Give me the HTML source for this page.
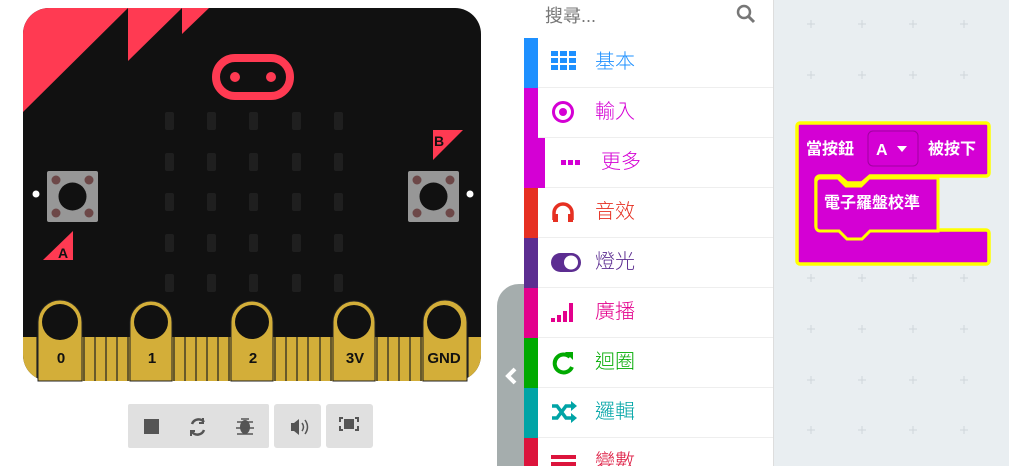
<!DOCTYPE html>
<html style="height:466px;overflow:hidden"><head><meta charset="utf-8"><style>
body{margin:0;width:1009px;height:466px;overflow:hidden;background:#fff;position:relative;font-family:"Liberation Sans","Noto Sans CJK TC",sans-serif}
.cat{position:absolute;left:524px;width:249px;height:49px;border-bottom:1px solid #eee;}
.cat .bar{position:absolute;left:0;top:0;width:14px;height:50px}
.cat .t{position:absolute;left:71px;top:12px;font-size:20px;line-height:24px;font-weight:300}
.cat svg{position:absolute;left:27px;top:13px}
</style></head><body>
<svg width="500" height="466" style="position:absolute;left:0;top:0">
<defs><clipPath id="b"><rect x="23" y="8" width="458" height="373" rx="26"/></clipPath></defs>
<g clip-path="url(#b)">
<rect x="23" y="8" width="458" height="373" fill="#111"/>
<polygon points="23,8 128,8 23,112" fill="#ff3a52"/>
<polygon points="128,8 182,8 128,61" fill="#ff3a52"/>
<polygon points="182,8 209,8 182,34" fill="#ff3a52"/>
<rect x="23" y="337" width="458" height="44" fill="#d3ae39"/>
<g stroke="#222" stroke-width="1.2">
<line x1="84" y1="337" x2="84" y2="381"/><line x1="95" y1="337" x2="95" y2="381"/><line x1="106" y1="337" x2="106" y2="381"/><line x1="117" y1="337" x2="117" y2="381"/><line x1="128" y1="337" x2="128" y2="381"/>
<line x1="174" y1="337" x2="174" y2="381"/><line x1="185" y1="337" x2="185" y2="381"/><line x1="196" y1="337" x2="196" y2="381"/><line x1="207" y1="337" x2="207" y2="381"/><line x1="218" y1="337" x2="218" y2="381"/><line x1="229" y1="337" x2="229" y2="381"/>
<line x1="275" y1="337" x2="275" y2="381"/><line x1="286" y1="337" x2="286" y2="381"/><line x1="297" y1="337" x2="297" y2="381"/><line x1="308" y1="337" x2="308" y2="381"/><line x1="320" y1="337" x2="320" y2="381"/><line x1="331" y1="337" x2="331" y2="381"/>
<line x1="377" y1="337" x2="377" y2="381"/><line x1="388" y1="337" x2="388" y2="381"/><line x1="399" y1="337" x2="399" y2="381"/><line x1="410" y1="337" x2="410" y2="381"/><line x1="421" y1="337" x2="421" y2="381"/>
<line x1="37" y1="337" x2="37" y2="381"/><line x1="468" y1="337" x2="468" y2="381"/>
</g>
</g>
<g fill="#d3ae39" stroke="#222" stroke-width="1">
<path d="M38,381 V322 a22,22 0 0 1 44,0 V381Z"/>
<path d="M130,381 V322 a21,21 0 0 1 42,0 V381Z"/>
<path d="M231,381 V322 a21,21 0 0 1 42,0 V381Z"/>
<path d="M333,381 V322 a21,21 0 0 1 42,0 V381Z"/>
<path d="M423,381 V322 a22,22 0 0 1 44,0 V381Z"/>
</g>
<g fill="#111"><circle cx="60" cy="322" r="18"/><circle cx="151" cy="322" r="17"/><circle cx="252" cy="322" r="17"/><circle cx="354" cy="322" r="17"/><circle cx="444" cy="322" r="17"/></g>
<g font-family="Liberation Sans" font-weight="bold" font-size="15" text-anchor="middle" fill="#111">
<text x="61" y="363">0</text><text x="152" y="363">1</text><text x="253" y="363">2</text><text x="355" y="363">3V</text><text x="444" y="363">GND</text></g>
<rect x="216" y="58" width="74" height="38" rx="19" fill="none" stroke="#ff3a52" stroke-width="8"/>
<circle cx="235" cy="77" r="5" fill="#ff3a52"/><circle cx="271" cy="77" r="5" fill="#ff3a52"/>
<g fill="#1f1f1f">
<rect x="165" y="112" width="9" height="18" rx="2"/><rect x="207" y="112" width="9" height="18" rx="2"/><rect x="249" y="112" width="9" height="18" rx="2"/><rect x="292" y="112" width="9" height="18" rx="2"/><rect x="334" y="112" width="9" height="18" rx="2"/>
<rect x="165" y="153" width="9" height="18" rx="2"/><rect x="207" y="153" width="9" height="18" rx="2"/><rect x="249" y="153" width="9" height="18" rx="2"/><rect x="292" y="153" width="9" height="18" rx="2"/><rect x="334" y="153" width="9" height="18" rx="2"/>
<rect x="165" y="193" width="9" height="18" rx="2"/><rect x="207" y="193" width="9" height="18" rx="2"/><rect x="249" y="193" width="9" height="18" rx="2"/><rect x="292" y="193" width="9" height="18" rx="2"/><rect x="334" y="193" width="9" height="18" rx="2"/>
<rect x="165" y="234" width="9" height="18" rx="2"/><rect x="207" y="234" width="9" height="18" rx="2"/><rect x="249" y="234" width="9" height="18" rx="2"/><rect x="292" y="234" width="9" height="18" rx="2"/><rect x="334" y="234" width="9" height="18" rx="2"/>
<rect x="165" y="274" width="9" height="18" rx="2"/><rect x="207" y="274" width="9" height="18" rx="2"/><rect x="249" y="274" width="9" height="18" rx="2"/><rect x="292" y="274" width="9" height="18" rx="2"/><rect x="334" y="274" width="9" height="18" rx="2"/>
</g>
<rect x="47" y="171" width="51" height="51" rx="2" fill="#979797"/><circle cx="72.5" cy="196.5" r="14" fill="#111"/>
<g fill="#6d4848"><circle cx="56" cy="180" r="4.5"/><circle cx="89" cy="180" r="4.5"/><circle cx="56" cy="213" r="4.5"/><circle cx="89" cy="213" r="4.5"/></g>
<rect x="408" y="171" width="51" height="51" rx="2" fill="#979797"/><circle cx="433.5" cy="196.5" r="14" fill="#111"/>
<g fill="#6d4848"><circle cx="417" cy="180" r="4.5"/><circle cx="450" cy="180" r="4.5"/><circle cx="417" cy="213" r="4.5"/><circle cx="450" cy="213" r="4.5"/></g>
<circle cx="36" cy="194" r="3.5" fill="#fff"/><circle cx="470" cy="194" r="3.5" fill="#fff"/>
<polygon points="43,260 73,260 73,231" fill="#ff3a52"/><text x="58" y="258" font-family="Liberation Sans" font-weight="bold" font-size="14" fill="#111">A</text>
<polygon points="433,130 463,130 433,160" fill="#ff3a52"/><text x="434" y="146" font-family="Liberation Sans" font-weight="bold" font-size="14" fill="#111">B</text>
<rect x="128" y="404" width="141" height="44" fill="#e0e0e0" rx="2"/>
<rect x="274" y="404" width="47" height="44" fill="#e0e0e0" rx="3"/>
<rect x="326" y="404" width="47" height="44" fill="#e0e0e0" rx="3"/>
<rect x="144" y="419" width="15" height="15" fill="#555"/>
<path d="M192,424 a7,7 0 0 1 12,-2 M204,430 a7,7 0 0 1 -12,2" stroke="#555" stroke-width="2.5" fill="none"/>
<path d="M203,418 v5 h-4 M191,436 v-5 h4" stroke="#555" stroke-width="2" fill="none"/>
<ellipse cx="245" cy="427" rx="5" ry="7" fill="#555"/><path d="M237,422 l16,0 M236,428 h18 M237,434 l16,0 M241,419 l8,0" stroke="#555" stroke-width="1.5"/>
<path d="M291,423 h3 l5,-4 v16 l-5,-4 h-3z" fill="#555"/><path d="M302,423 q3,4 0,8 M305,420 q5,7 0,14" stroke="#555" stroke-width="1.5" fill="none"/>
<path d="M343,418 h-3 v4 M355,418 h3 v4 M343,430 h-3 v-4 M355,430 h3 v-4" stroke="#555" stroke-width="2" fill="none"/><rect x="344" y="419" width="10" height="10" fill="#555"/>
</svg>
<div style="position:absolute;left:497px;top:284px;width:40px;height:182px;background:#a5adad;border-radius:22px 0 0 0"></div>
<svg style="position:absolute;left:503px;top:366px" width="16" height="20"><path d="M12,3 L5,10 L12,17" stroke="#fff" stroke-width="4" fill="none"/></svg>
<div style="position:absolute;left:524px;top:0;width:249px;height:466px;background:#fff;border-right:1px solid #ddd"></div>
<div style="position:absolute;left:545px;top:2px;font-size:18px;color:#777">搜尋...</div>
<svg style="position:absolute;left:736px;top:4px" width="20" height="20"><circle cx="8" cy="8" r="6" stroke="#777" stroke-width="2.5" fill="none"/><path d="M12.5,12.5 L18,18" stroke="#777" stroke-width="3"/></svg>
<div style="position:absolute;left:774px;top:0;width:235px;height:466px;background:#e9eef1"></div>
<svg style="position:absolute;left:774px;top:0" width="235" height="466"><g stroke="#d0d6da" stroke-width="1">
<path d="M33,24h8M37,20v8M84,24h8M88,20v8M135,24h8M139,20v8M186,24h8M190,20v8
M33,75h8M37,71v8M84,75h8M88,71v8M135,75h8M139,71v8M186,75h8M190,71v8
M33,278h8M37,274v8M84,278h8M88,274v8M135,278h8M139,274v8M186,278h8M190,274v8
M33,329h8M37,325v8M84,329h8M88,325v8M135,329h8M139,325v8M186,329h8M190,325v8
M33,380h8M37,376v8M84,380h8M88,376v8M135,380h8M139,376v8M186,380h8M190,376v8
M33,430h8M37,426v8M84,430h8M88,426v8M135,430h8M139,426v8M186,430h8M190,426v8"/></g></svg>

<div class="cat" style="top:38px"><div class="bar" style="background:#1e90ff"></div>
<svg width="28" height="22"><g fill="#1e90ff"><rect x="0" y="0" width="7" height="5"/><rect x="9" y="0" width="7" height="5"/><rect x="18" y="0" width="7" height="5"/><rect x="0" y="7" width="7" height="5"/><rect x="9" y="7" width="7" height="5"/><rect x="18" y="7" width="7" height="5"/><rect x="0" y="14" width="7" height="5"/><rect x="9" y="14" width="7" height="5"/><rect x="18" y="14" width="7" height="5"/></g></svg>
<div class="t" style="color:#1e90ff">基本</div></div>
<div class="cat" style="top:88px"><div class="bar" style="background:#d400d4"></div>
<svg width="28" height="24"><circle cx="12" cy="11" r="9.5" stroke="#d400d4" stroke-width="3" fill="none"/><circle cx="12" cy="11" r="4" fill="#d400d4"/></svg>
<div class="t" style="color:#d400d4">輸入</div></div>
<div class="cat" style="top:138px"><div class="bar" style="background:#d400d4;width:21px"></div>
<svg width="28" height="24" style="left:37px"><g fill="#d400d4"><rect x="0" y="9" width="5" height="5"/><rect x="7" y="9" width="5" height="5"/><rect x="14" y="9" width="5" height="5"/></g></svg>
<div class="t" style="color:#d400d4;left:77px">更多</div></div>
<div class="cat" style="top:188px"><div class="bar" style="background:#e63022"></div>
<svg width="28" height="24"><path d="M3,19 V12 a9,9 0 0 1 18,0 V19" stroke="#e63022" stroke-width="3.5" fill="none"/><rect x="2" y="13" width="5" height="8" fill="#e63022"/><rect x="17" y="13" width="5" height="8" fill="#e63022"/></svg>
<div class="t" style="color:#e63022">音效</div></div>
<div class="cat" style="top:238px"><div class="bar" style="background:#5c2d91"></div>
<svg width="32" height="24"><rect x="0" y="2" width="30" height="19" rx="9.5" fill="#5c2d91"/><circle cx="20" cy="11.5" r="7" fill="#fff"/></svg>
<div class="t" style="color:#5c2d91">燈光</div></div>
<div class="cat" style="top:288px"><div class="bar" style="background:#e3008c"></div>
<svg width="28" height="24"><g fill="#e3008c"><rect x="0" y="17" width="4" height="4"/><rect x="6" y="14" width="4" height="7"/><rect x="12" y="10" width="4" height="11"/><rect x="18" y="2" width="4" height="19"/></g></svg>
<div class="t" style="color:#e3008c">廣播</div></div>
<div class="cat" style="top:338px"><div class="bar" style="background:#00aa00"></div>
<svg width="28" height="24"><path d="M19,6 a9,9 0 1 0 2,10" stroke="#00aa00" stroke-width="4" fill="none"/><polygon points="14,1 22,1 22,9" fill="#00aa00"/></svg>
<div class="t" style="color:#00aa00">迴圈</div></div>
<div class="cat" style="top:388px"><div class="bar" style="background:#00a4a6"></div>
<svg width="28" height="24"><path d="M1,5 h5 l9,12 h6 M1,17 h5 l9,-12 h6" stroke="#00a4a6" stroke-width="3.5" fill="none"/><polygon points="20,0 26,5 20,10" fill="#00a4a6"/><polygon points="20,12 26,17 20,22" fill="#00a4a6"/></svg>
<div class="t" style="color:#00a4a6">邏輯</div></div>
<div class="cat" style="top:438px"><div class="bar" style="background:#dc143c"></div>
<svg width="28" height="24"><g fill="#dc143c"><rect x="0" y="4" width="25" height="4"/><rect x="0" y="11" width="25" height="4"/><rect x="0" y="18" width="25" height="4"/></g></svg>
<div class="t" style="color:#dc143c">變數</div></div>

<svg style="position:absolute;left:790px;top:118px" width="210" height="155">
<path d="M10,5 H196 a3,3 0 0 1 3,3 V55 a3,3 0 0 1 -3,3 H80 l-8,7 h-15 l-8,-7 H30 a4,4 0 0 0 -4,4 V108 a4,4 0 0 0 4,4 H49 l8,8 h15 l8,-8 H196 a3,3 0 0 1 3,3 V143 a3,3 0 0 1 -3,3 H10 a3,3 0 0 1 -3,-3 V8 a3,3 0 0 1 3,-3Z" fill="#d400d4" stroke="#ffff00" stroke-width="3.5"/>
<path d="M30,60 H48 l8,8 h15 l8,-8 H148 V113 H80 l-8,8 h-15 l-8,-8 H30 a4,4 0 0 1 -4,-4 V64 a4,4 0 0 1 4,-4Z" fill="#d400d4" stroke="#ffff00" stroke-width="3"/>
<rect x="78" y="13" width="50" height="35" rx="5" fill="#d400d4" stroke="#a000a0" stroke-width="1"/>
<polygon points="107,28 117,28 112,34" fill="#fff"/>
<g font-family="Liberation Sans,Noto Sans CJK TC,sans-serif" font-weight="bold" font-size="16" fill="#fff">
<text x="16" y="36">當按鈕</text><text x="86" y="37">A</text><text x="138" y="36">被按下</text><text x="34" y="90">電子羅盤校準</text></g>
</svg>
</body></html>
